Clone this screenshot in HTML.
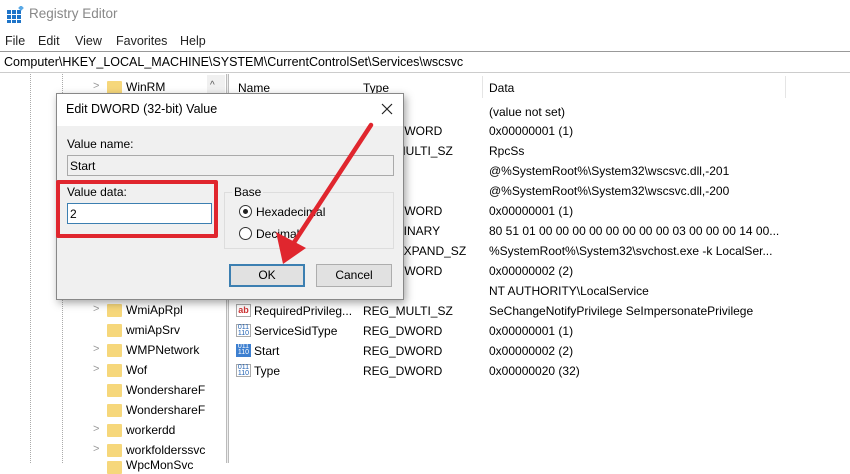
<!DOCTYPE html>
<html><head><style>
*{margin:0;padding:0;box-sizing:border-box}
body{width:850px;height:463px;overflow:hidden;background:#fff;font-family:"Liberation Sans",sans-serif;font-size:12px;color:#000;position:relative}
.a{position:absolute;white-space:nowrap}
.fold{position:absolute;width:15px;height:13px;background:#f6d77b;border-radius:1px}
.chev{position:absolute;color:#999;font-size:11px}
.t{position:absolute;left:126px;width:80px;overflow:hidden;white-space:nowrap}
.m{position:absolute;top:34px;font-size:12.5px;color:#222}
</style></head><body>
<!-- title -->
<svg class="a" style="left:7px;top:6px" width="17" height="17" viewBox="0 0 17 17"><g fill="#1e74c8"><rect x="0" y="4" width="4" height="4"/><rect x="5" y="4" width="4" height="4"/><rect x="0" y="9" width="4" height="4"/><rect x="5" y="9" width="4" height="4"/><rect x="10" y="9" width="4" height="4"/><rect x="0" y="14" width="4" height="3"/><rect x="5" y="14" width="4" height="3"/><rect x="10" y="14" width="4" height="3"/><rect x="10" y="4" width="4" height="4"/></g><rect x="12" y="0" width="4" height="4" fill="#5aa9e6" transform="rotate(45 14 2)"/></svg>
<div class="a" style="left:29px;top:6px;font-size:13.5px;color:#888">Registry Editor</div>
<div class="m" style="left:5px">File</div><div class="m" style="left:38px">Edit</div><div class="m" style="left:75px">View</div><div class="m" style="left:116px">Favorites</div><div class="m" style="left:180px">Help</div>
<div class="a" style="left:0;top:51px;width:850px;height:22px;border-top:1px solid #999;border-bottom:1px solid #ccc"></div>
<div class="a" style="left:4px;top:55px;font-size:12.5px">Computer\HKEY_LOCAL_MACHINE\SYSTEM\CurrentControlSet\Services\wscsvc</div>
<!-- tree -->
<div class="a" style="left:30px;top:74px;height:389px;border-left:1px dotted #aaa"></div>
<div class="a" style="left:62px;top:74px;height:389px;border-left:1px dotted #aaa"></div>
<div class="a" style="left:207px;top:75px;width:18px;height:18px;background:#f0f0f0"></div>
<div class="a" style="left:210px;top:80px;font-size:10px;color:#555">&#94;</div>
<div class="a" style="left:226px;top:74px;width:3px;height:389px;background:#eee;border-left:1px solid #bbb;border-right:1px solid #bbb"></div>
<div class="chev" style="left:93px;top:80px">&gt;</div><div class="fold" style="left:107px;top:81px"></div><div class="t" style="top:80px">WinRM</div>
<div class="chev" style="left:93px;top:303px">&gt;</div><div class="fold" style="left:107px;top:304px"></div><div class="t" style="top:303px">WmiApRpl</div>
<div class="fold" style="left:107px;top:324px"></div><div class="t" style="top:323px">wmiApSrv</div>
<div class="chev" style="left:93px;top:343px">&gt;</div><div class="fold" style="left:107px;top:344px"></div><div class="t" style="top:343px">WMPNetwork</div>
<div class="chev" style="left:93px;top:363px">&gt;</div><div class="fold" style="left:107px;top:364px"></div><div class="t" style="top:363px">Wof</div>
<div class="fold" style="left:107px;top:384px"></div><div class="t" style="top:383px">WondershareF</div>
<div class="fold" style="left:107px;top:404px"></div><div class="t" style="top:403px">WondershareF</div>
<div class="chev" style="left:93px;top:423px">&gt;</div><div class="fold" style="left:107px;top:424px"></div><div class="t" style="top:423px">workerdd</div>
<div class="chev" style="left:93px;top:443px">&gt;</div><div class="fold" style="left:107px;top:444px"></div><div class="t" style="top:443px">workfolderssvc</div>
<div class="fold" style="left:107px;top:461px"></div><div class="t" style="top:458px">WpcMonSvc</div>
<!-- list header -->
<div class="a" style="left:482px;top:76px;height:22px;border-left:1px solid #e5e5e5"></div>
<div class="a" style="left:785px;top:76px;height:22px;border-left:1px solid #e5e5e5"></div>
<div class="a" style="left:238px;top:81px">Name</div>
<div class="a" style="left:363px;top:81px">Type</div>
<div class="a" style="left:489px;top:81px">Data</div>
<div class="a" style="left:489px;top:105px">(value not set)</div>
<div class="a" style="left:363px;top:124px">REG_DWORD</div><div class="a" style="left:489px;top:124px">0x00000001 (1)</div>
<div class="a" style="left:363px;top:144px">REG_MULTI_SZ</div><div class="a" style="left:489px;top:144px">RpcSs</div>
<div class="a" style="left:489px;top:164px">@%SystemRoot%\System32\wscsvc.dll,-201</div>
<div class="a" style="left:489px;top:184px">@%SystemRoot%\System32\wscsvc.dll,-200</div>
<div class="a" style="left:363px;top:204px">REG_DWORD</div><div class="a" style="left:489px;top:204px">0x00000001 (1)</div>
<div class="a" style="left:363px;top:224px">REG_BINARY</div><div class="a" style="left:489px;top:224px">80 51 01 00 00 00 00 00 00 00 00 03 00 00 00 14 00...</div>
<div class="a" style="left:363px;top:244px">REG_EXPAND_SZ</div><div class="a" style="left:489px;top:244px">%SystemRoot%\System32\svchost.exe -k LocalSer...</div>
<div class="a" style="left:363px;top:264px">REG_DWORD</div><div class="a" style="left:489px;top:264px">0x00000002 (2)</div>
<div class="a" style="left:489px;top:284px">NT AUTHORITY\LocalService</div>
<div class="a" style="left:236px;top:304px;font-size:9px;color:#c33;font-weight:bold;border:1px solid #aaa;width:15px;height:13px;line-height:11px;text-align:center">ab</div>
<div class="a" style="left:254px;top:304px">RequiredPrivileg...</div><div class="a" style="left:363px;top:304px">REG_MULTI_SZ</div><div class="a" style="left:489px;top:304px">SeChangeNotifyPrivilege SeImpersonatePrivilege</div>
<div class="a" style="left:236px;top:324px;width:15px;height:13px;border:1px solid #aaa;font-size:7px;line-height:6px;color:#1e5fb0;text-align:center">011<br>110</div>
<div class="a" style="left:254px;top:324px">ServiceSidType</div><div class="a" style="left:363px;top:324px">REG_DWORD</div><div class="a" style="left:489px;top:324px">0x00000001 (1)</div>
<div class="a" style="left:236px;top:344px;width:15px;height:13px;background:#3d7fd0;font-size:7px;line-height:6px;color:#fff;text-align:center">011<br>110</div>
<div class="a" style="left:254px;top:344px">Start</div><div class="a" style="left:363px;top:344px">REG_DWORD</div><div class="a" style="left:489px;top:344px">0x00000002 (2)</div>
<div class="a" style="left:236px;top:364px;width:15px;height:13px;border:1px solid #aaa;font-size:7px;line-height:6px;color:#1e5fb0;text-align:center">011<br>110</div>
<div class="a" style="left:254px;top:364px">Type</div><div class="a" style="left:363px;top:364px">REG_DWORD</div><div class="a" style="left:489px;top:364px">0x00000020 (32)</div>
<!-- dialog -->
<div class="a" style="left:56px;top:93px;width:348px;height:207px;background:#f0f0f0;border:1px solid #888;box-shadow:2px 3px 8px rgba(0,0,0,.35)">
  <div style="position:absolute;left:0;top:0;width:346px;height:32px;background:#fff"></div>
  <div class="a" style="left:9px;top:8px;font-size:12.5px">Edit DWORD (32-bit) Value</div>
  <svg class="a" style="left:324px;top:9px" width="12" height="12"><path d="M1 1L11 11M11 1L1 11" stroke="#222" stroke-width="1.2"/></svg>
  <div class="a" style="left:10px;top:43px">Value name:</div>
  <div class="a" style="left:10px;top:61px;width:327px;height:21px;border:1px solid #aaa;background:#f0f0f0;padding:3px 2px">Start</div>
  <div class="a" style="left:10px;top:91px">Value data:</div>
  <div class="a" style="left:10px;top:109px;width:145px;height:21px;border:1px solid #3c7fb1;background:#fff;padding:3px 2px">2</div>
  <div class="a" style="left:167px;top:98px;width:170px;height:57px;border:1px solid #ddd"></div>
  <div class="a" style="left:175px;top:91px;background:#f0f0f0;padding:0 2px">Base</div>
  <div class="a" style="left:182px;top:111px;width:13px;height:13px;border:1px solid #333;border-radius:50%;background:#fff"><div style="position:absolute;left:3px;top:3px;width:5px;height:5px;border-radius:50%;background:#222"></div></div>
  <div class="a" style="left:199px;top:111px">Hexadecimal</div>
  <div class="a" style="left:182px;top:133px;width:13px;height:13px;border:1px solid #333;border-radius:50%;background:#fff"></div>
  <div class="a" style="left:199px;top:133px">Decimal</div>
  <div class="a" style="left:172px;top:170px;width:76px;height:23px;border:2px solid #3c7fb1;background:#e1e1e1;text-align:center;line-height:19px">OK</div>
  <div class="a" style="left:259px;top:170px;width:76px;height:23px;border:1px solid #adadad;background:#e1e1e1;text-align:center;line-height:21px">Cancel</div>
</div>
<div class="a" style="left:56px;top:180px;width:162px;height:58px;border:4px solid #e0262e;border-radius:2px"></div>
<svg class="a" style="left:0;top:0" width="850" height="463"><line x1="371" y1="125" x2="293" y2="244" stroke="#e0262e" stroke-width="4.5" stroke-linecap="round"/><polygon points="283,264 276,232 306,248" fill="#e0262e"/></svg>
</body></html>
